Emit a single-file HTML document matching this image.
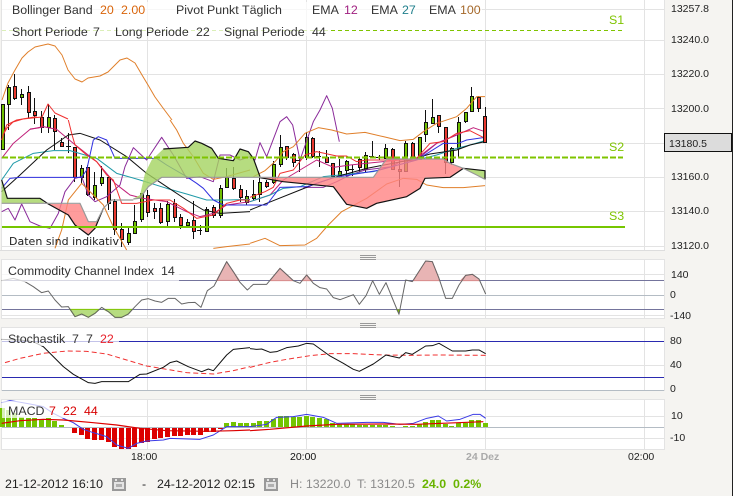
<!DOCTYPE html>
<html>
<head>
<meta charset="utf-8">
<style>
html,body{margin:0;padding:0;background:#f5f4f1;}
svg{display:block;position:absolute;left:0;top:0;}
svg *{vector-effect:non-scaling-stroke;}
text{font-family:"Liberation Sans",sans-serif;font-size:12.4px;fill:#333;}
.l{fill:none;stroke-width:1;stroke-linejoin:round;}
.g{stroke:#e3e3e3;stroke-width:1;fill:none;shape-rendering:crispEdges;}
.ax{font-size:10.5px;fill:#222;}
</style>
</head>
<body>
<svg width="733" height="496" viewBox="0 0 733 496" xmlns="http://www.w3.org/2000/svg">
<rect width="733" height="496" fill="#f5f4f1"/>
<rect x="732" width="1" height="496" fill="#222"/>

<!-- panels -->
<rect x="2" y="0" width="662" height="250" fill="#fff"/>
<rect x="2" y="260" width="662" height="58" fill="#fff"/>
<rect x="2" y="328" width="662" height="62" fill="#fff"/>
<rect x="2" y="400" width="662" height="49" fill="#fff"/>
<path class="g" d="M1.5 0V250.5H664.5V0M1.5 259.5H664.5V318.5H1.5ZM1.5 327.5H664.5V390.5H1.5ZM1.5 399.5H664.5V449.5H1.5Z"/>
<path d="M0 250.5H665" stroke="#ddd" fill="none"/>
<!-- grid -->
<path class="g" d="M2 9.5H664M2 40.5H664M2 74.5H664M2 108.5H664M2 143.5H664M2 177.5H664M2 211.5H664M2 246.5H664
M147.5 0V250M306.5 0V250M485.5 0V250M644.5 0V250
M2 274.5H664M2 315.5H664M147.5 260V318M306.5 260V318M485.5 260V318M644.5 260V318
M2 365.5H664M147.5 328V390M306.5 328V390M485.5 328V390M644.5 328V390
M2 416.5H664M2 438.5H664M147.5 400V449M306.5 400V449M485.5 400V449M644.5 400V449"/>
<path d="M2 295.5H664M2 390.5H664M2 427.5H664" stroke="#b4bcc4" fill="none" shape-rendering="crispEdges"/>
<path d="M2 280.5H664M2 309.5H664" stroke="#74749c" fill="none" shape-rendering="crispEdges"/>
<path d="M2 341.5H664M2 377.5H664" stroke="#2a2ab0" fill="none" shape-rendering="crispEdges"/>

<!-- candle wicks -->
<path fill="none" stroke="#111" shape-rendering="crispEdges" d="M2.5 104V150M8.5 85V130M14.5 74V100M21.5 89V105M28.5 86V118M34.5 98V124M41.5 111V133M48.5 104V133M54.5 115V150M61.5 138V147M68.5 133V153M74.5 147V182M81.5 165V183M87.5 165V196M94.5 172V200M101.5 166V186M108.5 177V210M114.5 199V235M121.5 223V247M128.5 228V245M134.5 205V234M141.5 193V222M147.5 190V217M154.5 203V219M160.5 203V224M167.5 201V226M174.5 199V222M180.5 214V229M187.5 219V228M193.5 201V239M200.5 225V235M206.5 207V231M213.5 205V218M220.5 185V218M226.5 168V188M233.5 167V190M240.5 185V202M246.5 190V205M253.5 180V200M259.5 177V202M266.5 180V188M273.5 161V184M280.5 135V167M286.5 146V160M293.5 153V167M299.5 158V172M306.5 132V160M312.5 137V158M319.5 151V167M326.5 150V163M332.5 163V177M339.5 159V178M346.5 160V177M352.5 165V176M359.5 157V172M365.5 152V172M372.5 141V157M379.5 155V160M385.5 144V159M392.5 148V170M399.5 158V187M405.5 141V172M412.5 142V158M419.5 137V160M425.5 110V142M432.5 99V124M438.5 115V133M445.5 127V174M451.5 147V165M458.5 117V157M465.5 112V123M471.5 87V112M478.5 96V112M485.5 107V142
M66 146.5H71M197 230.5H202M296 160.5H301M316 156.5H321M349 169.5H354M369 156.5H374M376 157.5H381"/>
<!-- green bodies -->
<path fill="#6fbf00" stroke="#111" shape-rendering="crispEdges" d="M1.5 104.5h3V149.5h-3zM7.5 87.5h3V104.5h-3zM20.5 94.5h3V97.5h-3zM47.5 117.5h3V127.5h-3zM80.5 168.5h3V177.5h-3zM93.5 185.5h3V197.5h-3zM100.5 177.5h3V183.5h-3zM127.5 233.5h3V242.5h-3zM133.5 221.5h3V233.5h-3zM140.5 193.5h3V219.5h-3zM166.5 204.5h3V221.5h-3zM186.5 222.5h3V225.5h-3zM205.5 209.5h3V231.5h-3zM219.5 188.5h3V215.5h-3zM225.5 177.5h3V187.5h-3zM245.5 196.5h3V202.5h-3zM252.5 194.5h3V198.5h-3zM258.5 182.5h3V194.5h-3zM272.5 164.5h3V182.5h-3zM279.5 147.5h3V164.5h-3zM305.5 137.5h3V157.5h-3zM338.5 171.5h3V176.5h-3zM345.5 161.5h3V170.5h-3zM364.5 155.5h3V169.5h-3zM384.5 148.5h3V158.5h-3zM404.5 143.5h3V171.5h-3zM418.5 137.5h3V159.5h-3zM424.5 122.5h3V134.5h-3zM431.5 117.5h3V123.5h-3zM450.5 148.5h3V162.5h-3zM457.5 122.5h3V148.5h-3zM464.5 112.5h3V121.5h-3zM470.5 96.5h3V111.5h-3z"/>
<!-- red bodies -->
<path fill="#e8392f" stroke="#111" shape-rendering="crispEdges" d="M13.5 86.5h3V98.5h-3zM27.5 92.5h3V112.5h-3zM33.5 111.5h3V115.5h-3zM40.5 117.5h3V127.5h-3zM53.5 118.5h3V131.5h-3zM60.5 142.5h3V146.5h-3zM73.5 147.5h3V177.5h-3zM86.5 167.5h3V194.5h-3zM107.5 177.5h3V203.5h-3zM113.5 201.5h3V229.5h-3zM120.5 229.5h3V239.5h-3zM146.5 195.5h3V212.5h-3zM153.5 208.5h3V211.5h-3zM159.5 208.5h3V222.5h-3zM173.5 203.5h3V217.5h-3zM179.5 217.5h3V225.5h-3zM192.5 220.5h3V231.5h-3zM212.5 207.5h3V215.5h-3zM232.5 178.5h3V188.5h-3zM239.5 189.5h3V197.5h-3zM265.5 182.5h3V186.5h-3zM285.5 146.5h3V157.5h-3zM292.5 154.5h3V162.5h-3zM311.5 138.5h3V156.5h-3zM325.5 157.5h3V162.5h-3zM331.5 163.5h3V176.5h-3zM358.5 159.5h3V167.5h-3zM391.5 149.5h3V169.5h-3zM398.5 169.5h3V171.5h-3zM411.5 143.5h3V157.5h-3zM437.5 115.5h3V126.5h-3zM444.5 127.5h3V162.5h-3zM477.5 97.5h3V108.5h-3z"/>

<!-- indicator lines, left half -->
<g transform="translate(0,120) scale(.33333)">
<path class="l" stroke="#8a2a9a" d="M5 275L25 265L45 300L65 252L90 305L120 318L150 325L175 280L195 215L225 175L245 170L265 225L285 245L320 230L360 195L375 140L400 83L440 120L485 52L520 105L560 175L600 170L640 185L660 105L690 105L720 120L750 110"/>
<path class="l" stroke="#c0207a" d="M5 115L40 70L90 28L130 20L170 28L220 70L290 125L345 190L390 225L430 235L500 245L560 275L600 290L640 280L680 255L750 245"/>
<path class="l" stroke="#209aa8" d="M5 180L40 130L100 100L160 92L210 92L290 115L350 160L420 180L500 205L560 222L620 240L680 240L750 238"/>
<path class="l" stroke="#111" d="M5 215L60 165L140 90L205 45L240 40L300 60L380 110L440 160L500 200L560 240L610 270L660 280L750 275"/>
<path class="l" stroke="#3030e0" d="M5 205L30 175L60 172H245L260 150L280 60L295 50L320 60L345 115H450L470 115L500 135L560 170L590 190L610 205L640 240L670 255H750"/>
<path class="l" stroke="#f03030" d="M5 60L20 15L50 0L110 -10M205 0L215 40L225 75L260 105L290 125L320 165L340 180L365 250H410L460 240H510L550 265L590 295L640 285L680 250L720 240H750"/>
<path class="l" stroke="#e07f2a" d="M510 0L530 30L550 70L580 110L610 160L640 178L680 170L750 150"/>
<path class="l" stroke="#e07f2a" d="M165 385L185 330L205 240L245 190L280 225L310 255L340 320L360 355L380 390M640 385L680 380L750 372"/>
</g>
<!-- top-left lines -->
<path class="l" stroke="#e07f2a" d="M2 100L8 83L15 70L22 58L28 52L35 47L48 44L55 46L62 55L68 70L75 79L82 82L88 78L100 76L108 72L120 60L127 58L135 63L142 75L148 85L155 97L163 108L172 120"/>
<path class="l" stroke="#f03030" d="M3 135L7 128L13 122L23 119L42 117L48 104L55 113L68 119"/>
<path class="l" stroke="#c0207a" d="M30 129L38 128L43 127"/>
<!-- right half lines -->
<g transform="translate(250,80) scale(.33333)">
<path class="l" stroke="#8a2a9a" d="M0 231L15 240L30 188L50 230L90 125L110 110L128 135L150 240L190 125L210 90L230 47L247 85L268 185"/>
<path class="l" stroke="#8a2a9a" d="M160 322H220L260 305L300 285L345 270L425 260L450 245L500 240L560 190L620 165"/>
<path class="l" stroke="#c0207a" d="M0 365L60 345L100 300L150 270L200 240L250 262L300 255L400 245L450 240L500 235L560 190L620 165L670 143L705 155"/>
<path class="l" stroke="#209aa8" d="M0 365L60 345L100 325L150 320L220 290L370 275L500 240L560 225L620 205L660 195L705 182"/>
<path class="l" stroke="#111" d="M0 390L50 370L150 330L200 310L260 290L350 265L480 240L540 222L620 210L660 195L705 185"/>
<path class="l" stroke="#3030e0" d="M0 375H50L90 322L170 320L255 292L380 272L500 240L580 190H625L650 180L705 172"/>
<path class="l" stroke="#f03030" d="M0 352L45 335L70 322L90 280L130 270L165 225L200 215L260 228H290L320 245L350 240H440L500 235L540 190L580 185L620 160L660 152L705 175"/>
<path class="l" stroke="#e07f2a" d="M10 290L45 272L75 245L100 215L130 200L165 160L205 143L245 150L290 162L345 157L400 170L450 182L490 178L520 155L560 130L620 110L650 85L680 50H705"/>
<path class="l" stroke="#e07f2a" d="M0 490L45 475L90 497L165 495L200 475L235 435L275 395L350 355L410 312L460 295L500 298L530 315L580 323H640L705 317"/>
</g>

<!-- kumo over lines (semi-transparent) -->
<g transform="translate(0,120) scale(.33333)">
<path d="M5 180L22 235H120L135 250H5Z" fill="#a4d360" fill-opacity=".8"/>
<path d="M145 252H240L265 305H290L310 265L335 240L310 265L285 325L265 345L225 315L205 285Z" fill="#ff8383" fill-opacity=".8"/>
<path class="l" d="M5 180L22 235H120L145 252L205 285L225 315L265 345L285 325L310 265" stroke="#111" style="stroke-width:1.2"/>
<path class="l" d="M5 250H240L265 305H290L310 265L335 240H400" stroke="#999" style="stroke-width:1.2"/>
</g>
<g transform="translate(120,130) scale(.33333)">
<path d="M40 206L60 195L75 130L95 90L130 57L205 52L225 33L245 40L275 55L295 85L340 92L360 57L385 65L400 85L420 140V142H125L85 170L60 205Z" fill="#a4d360" fill-opacity=".8"/>
<path class="l" d="M130 57L205 52L225 33L245 40L275 55L295 85L340 92L360 57L385 65L400 85L420 140" stroke="#111" style="stroke-width:1.2"/>
<path class="l" d="M40 207L60 205L85 170L125 142H420" stroke="#999" style="stroke-width:1.2"/>
</g>
<g transform="translate(250,80) scale(.33333)">
<path d="M30 293H370L400 250L410 237H580L600 250L640 265L600 292H525L510 325L470 350L380 370L350 385L290 373L250 320L100 305Z" fill="#ff8383" fill-opacity=".8"/>
<path d="M640 265L705 272V298L680 285Z" fill="#a4d360" fill-opacity=".8"/>
<path class="l" d="M30 293L100 305L250 320L290 373L350 385L380 370L470 350L510 325L525 295L600 292L640 265L705 272V298" stroke="#111" style="stroke-width:1.2"/>
<path class="l" d="M30 292H370L400 250L410 237H580L600 250L640 265L680 285L705 298" stroke="#999" style="stroke-width:1.2"/>
</g>
<rect x="483.500" y="116.500" width="3" height="26" fill="#e8392f" stroke="#111" shape-rendering="crispEdges"/>

<!-- pivots -->
<path d="M2 30.500H622" stroke="#7fc400" stroke-dasharray="4 3" fill="none" shape-rendering="crispEdges"/>
<path d="M2 157.500H623" stroke="#7fc400" stroke-width="2" stroke-dasharray="6 2" fill="none" shape-rendering="crispEdges"/>
<path d="M2 227H625" stroke="#76c600" stroke-width="2" fill="none" shape-rendering="crispEdges"/>
<text x="609" y="24" style="fill:#7fc400">S1</text>
<text x="609" y="151" style="fill:#7fc400">S2</text>
<text x="609" y="220" style="fill:#7fc400">S3</text>

<!-- main legend -->
<rect x="2" y="2" width="480" height="16" fill="#fff" opacity=".72"/>
<rect x="2" y="18" width="328" height="18" fill="#fff" opacity=".72"/>
<text x="12" y="14">Bollinger Band</text>
<text x="100" y="14" style="fill:#d9640a">20</text>
<text x="121" y="14" style="fill:#d9640a">2.00</text>
<text x="176" y="14">Pivot Punkt</text>
<text x="242" y="14">Täglich</text>
<text x="312" y="14">EMA</text>
<text x="344" y="14" style="fill:#a02080">12</text>
<text x="371" y="14">EMA</text>
<text x="402" y="14" style="fill:#1f7f8c">27</text>
<text x="429" y="14">EMA</text>
<text x="460" y="14" style="fill:#a5682a">100</text>
<text x="12" y="36">Short Periode</text>
<text x="93" y="36">7</text>
<text x="115" y="36">Long Periode</text>
<text x="196" y="36">22</text>
<text x="224" y="36">Signal Periode</text>
<text x="312" y="36">44</text>
<text x="9" y="245" textLength="110" style='font-family:"DejaVu Sans",sans-serif;font-size:11px;fill:#222'>Daten sind indikativ</text>

<!-- right axis -->
<text class="ax" x="671" y="12">13257.8</text>
<text class="ax" x="671" y="43">13240.0</text>
<text class="ax" x="671" y="77">13220.0</text>
<text class="ax" x="671" y="112">13200.0</text>
<text class="ax" x="671" y="180">13160.0</text>
<text class="ax" x="671" y="214">13140.0</text>
<text class="ax" x="671" y="249">13120.0</text>
<rect x="664.500" y="133.500" width="67" height="18" fill="#dcdcdc" stroke="#111"/>
<text class="ax" x="669" y="147">13180.5</text>
<text class="ax" x="671" y="278">140</text>
<text class="ax" x="670" y="298">0</text>
<text class="ax" x="670" y="319">-140</text>
<text class="ax" x="670" y="344">80</text>
<text class="ax" x="670" y="368">40</text>
<text class="ax" x="670" y="392">0</text>
<text class="ax" x="671" y="419">10</text>
<text class="ax" x="670" y="441">-10</text>

<!-- CCI -->
<g transform="translate(0,250) scale(.33333)">
<path d="M650 91L680 35L700 65L718 91Z" fill="#e8b4b4" stroke="#d88a8a"/>
<path d="M210 178L225 200L245 192L265 202L285 190L297 178ZM312 178L325 185L345 202L365 202L385 192L397 178Z" fill="#b6dc80" stroke="#7fc400"/>
<path class="l" stroke="#666" d="M5 92L40 85L75 95L100 110L125 128L145 123L165 150L185 171L205 170L225 200L245 192L265 202L285 190L305 172L325 185L345 202L365 202L385 192L405 170L425 150L445 146L465 153L485 157L505 145L525 145L545 162L565 158L585 157L603 172L622 122L642 108L680 35L700 65L720 97L742 120L750 113"/>
</g>
<g transform="translate(250,250) scale(.33333)">
<path d="M60 92L90 55L130 92ZM155 92L170 75L186 92ZM490 92L527 33L547 35L567 85V92ZM632 92L647 76L667 73L687 87L688 92Z" fill="#e8b4b4" stroke="#d88a8a"/>
<path d="M438 178L447 193L452 178Z" fill="#7fc400"/>
<path class="l" stroke="#666" d="M0 112L10 103H50L90 55L130 92L150 100L170 75L190 100L210 113L230 117L250 143L270 149L310 134L328 163L348 137L368 92L388 133L408 98L428 147L447 193L467 90L487 95L527 33L547 35L567 85L587 145H607L627 105L647 76L667 73L687 87L707 132"/>
</g>
<rect x="2" y="261" width="177" height="21" fill="#fff" opacity=".72"/>
<text x="8" y="275">Commodity Channel Index</text>
<text x="161" y="275">14</text>

<!-- Stochastic -->
<g transform="translate(0,250) scale(.33333)">
<path class="l" stroke="#f03030" stroke-dasharray="5 3" d="M15 338L60 325L130 310L200 303L260 304L320 312L380 330L440 348L500 358L560 368L640 372L700 362L750 350"/>
<path class="l" stroke="#111" d="M5 268L60 270L100 275L130 290L160 320L190 350L220 373L265 398L285 400L305 395H385L420 373L440 372L490 352L510 338L530 333L565 350L605 365L625 357L640 362L680 315L700 298L750 293"/>
</g>
<g transform="translate(250,250) scale(.33333)">
<path class="l" stroke="#f03030" stroke-dasharray="5 3" d="M0 352L60 337L110 328L180 317L240 311H310L400 315L480 316L560 315L707 316"/>
<path class="l" stroke="#111" d="M0 296L20 298L35 297L60 307L80 305L110 293L145 288L170 280L190 282L240 318L280 340L310 358L328 364L370 342L408 315L448 324L467 308L487 313L527 288L547 287L567 280L607 303H647L667 300H687L707 311"/>
</g>
<rect x="2" y="329" width="117" height="17" fill="#fff" opacity=".72"/>
<text x="8" y="343">Stochastik</text>
<text x="72" y="343">7</text>
<text x="86" y="343">7</text>
<text x="100" y="343" style="fill:#e8202a">22</text>

<!-- MACD bars -->
<path fill="none" stroke="#74c400" stroke-width="4.600" shape-rendering="crispEdges" d="M2.500 427V408M8.500 427V410M14.500 427V413M21.500 427V417M28.500 427V418M34.500 427V418M41.500 427V420M48.500 427V418M54.500 427V421M61.500 427V425M226.500 427V423M233.500 427V422M240.500 427V423M246.500 427V423M253.500 427V423M259.500 427V421M266.500 427V421M273.500 427V419M280.500 427V416M286.500 427V416M293.500 427V417M299.500 427V417M306.500 427V416M312.500 427V417M319.500 427V418M326.500 427V419M332.500 427V423M339.500 427V424M346.500 427V424M352.500 427V424M359.500 427V425M365.500 427V425M372.500 427V425M379.500 427V425M385.500 427V425M392.500 427V426M405.500 427V426M412.500 427V426M419.500 427V424M425.500 427V422M432.500 427V420M438.500 427V420M445.500 427V424M451.500 427V426M458.500 427V423M465.500 427V423M471.500 427V420M478.500 427V420M485.500 427V423"/>
<path fill="none" stroke="#dc0000" stroke-width="4.600" shape-rendering="crispEdges" d="M74.500 428V433M81.500 428V435M87.500 428V439M94.500 428V440M101.500 428V440M108.500 428V442M114.500 428V447M121.500 428V449M128.500 428V449M134.500 428V447M141.500 428V443M147.500 428V442M154.500 428V439M160.500 428V438M167.500 428V437M174.500 428V436M180.500 428V436M187.500 428V435M193.500 428V435M200.500 428V435M206.500 428V432M213.500 428V432M220.500 428V429"/>
<g transform="translate(0,390) scale(.33333)">
<path class="l" stroke="#3a3ae6" d="M5 38L30 32L50 35L90 42L130 50L160 70L190 85L220 98L250 118L280 128L320 140L350 165L385 175L410 160L440 153L490 150L510 145L600 148L640 135L680 110H750"/>
<path class="l" stroke="#dc0000" style="stroke-width:1.2" d="M5 100L60 92L130 88L190 90L280 98L350 105L420 115L500 122L620 124L700 122L750 120"/>
</g>
<g transform="translate(250,390) scale(.33333)">
<path class="l" stroke="#3a3ae6" d="M0 110L50 103L80 82L130 80L170 73L220 82L260 100L350 97H400L450 103L490 100L530 85L565 78L590 93L630 88L670 73H690L707 85"/>
<path class="l" stroke="#dc0000" style="stroke-width:1.2" d="M0 122L60 118L170 108L260 103L400 102L500 103L700 95"/>
</g>
<rect x="2" y="401" width="98" height="17" fill="#fff" opacity=".72"/>
<text x="8" y="415">MACD</text>
<text x="49" y="415" style="fill:#d80000">7</text>
<text x="63" y="415" style="fill:#d80000">22</text>
<text x="84" y="415" style="fill:#d80000">44</text>

<!-- separator grips -->
<path d="M360 255.500H376M360 257.500H376M360 259.500H376M360 323.500H376M360 325.500H376M360 327.500H376M360 395.500H376M360 397.500H376M360 399.500H376" stroke="#999" fill="none" shape-rendering="crispEdges"/>

<!-- time axis -->
<text x="131" y="460" style="font-size:10.5px;fill:#222">18:00</text>
<text x="290" y="460" style="font-size:10.5px;fill:#111">20:00</text>
<text x="466" y="460" style="font-size:10.5px;fill:#aaa;font-weight:bold">24 Dez</text>
<text x="628" y="460" style="font-size:10.5px;fill:#222">02:00</text>

<!-- footer -->
<text x="5" y="488" textLength="98" style="fill:#222">21-12-2012 16:10</text>
<path d="M112 478H126V491H112Z" fill="#999"/>
<path d="M115 479h2v2h-2zM121 479h2v2h-2z" fill="#e4e4e4"/>
<path d="M114 482H124V489H114Z" fill="#e4e4e4"/>
<path d="M116 484H122V487H116Z" fill="#b0b0b0"/>
<text x="142" y="488" style="fill:#222">-</text>
<text x="157" y="488" textLength="98" style="fill:#222">24-12-2012 02:15</text>
<path d="M264 478H278V491H264Z" fill="#999"/>
<path d="M267 479h2v2h-2zM273 479h2v2h-2z" fill="#e4e4e4"/>
<path d="M266 482H276V489H266Z" fill="#e4e4e4"/>
<path d="M268 484H274V487H268Z" fill="#b0b0b0"/>
<text x="290" y="488" style="fill:#8a8a8a">H: 13220.0</text>
<text x="357" y="488" style="fill:#8a8a8a">T: 13120.5</text>
<text x="422" y="488" style="fill:#69b400;font-weight:bold">24.0</text>
<text x="453" y="488" style="fill:#69b400;font-weight:bold">0.2%</text>
</svg>
</body>
</html>
